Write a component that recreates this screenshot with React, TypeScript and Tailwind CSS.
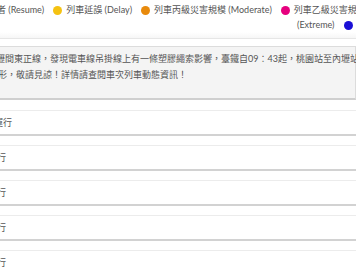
const legend = [
  { color: "bg-[#f5c211]", label: "列車延誤 (Delay)" },
  { color: "bg-[#e88a0c]", label: "列車丙級災害規模 (Moderate)" },
  { color: "bg-[#e6007e]", label: "列車乙級災害規模" },
];

const rows = ["運行", "行", "行", "行", "行"];

function Dot({ color }: { color: string }) {
  return <span className={`inline-block h-[9px] w-[9px] shrink-0 rounded-full ${color}`} />;
}

export default function App() {
  return (
    <div className="h-[272px] w-[356px] overflow-hidden bg-white font-['Lato','Noto_Sans_CJK_TC',sans-serif] text-[9px] text-[#555]">
      {/* legend */}
      <div className="flex h-[18px] items-center gap-[9px] whitespace-nowrap pt-[2px]">
        <span className="-ml-[3px]">者 (Resume)</span>
        {legend.map((item) => (
          <span key={item.label} className="flex items-center gap-[4px]">
            <Dot color={item.color} />
            {item.label}
          </span>
        ))}
      </div>
      <div className="flex h-[14px] items-center gap-[9px] whitespace-nowrap pl-[297px]">
        <span>(Extreme)</span>
        <span className="flex items-center gap-[4px]">
          <Dot color="bg-[#1a0fd6]" />
          列車
        </span>
      </div>

      {/* divider */}
      <div className="h-[6px] bg-gradient-to-b from-white to-[#f6f6f6]" />
      <div className="h-px bg-[#e6e6e6]" />

      {/* notice */}
      <div className="mt-[7px] -ml-px border border-[#dcdcdc] border-b-2 border-b-[#cfcfcf] bg-[#f4f4f4] pt-[4px] pb-[15px] leading-[16px] whitespace-nowrap">
        <p className="-ml-[4px]">壢間東正線，發現電車線吊掛線上有一條塑膠繩索影響，臺鐵自09：43起，桃園站至內壢站各次南下列車</p>
        <p className="-ml-[2px]">形，敬請見諒！詳情請查閱車次列車動態資訊！</p>
      </div>

      {/* rows */}
      <div className="mt-[10px] flex flex-col gap-[9px]">
        {rows.map((text, i) => (
          <div
            key={i}
            className="flex h-[26px] items-center border-t border-[#ececec] border-b-2 border-b-[#d2d2d2] bg-white whitespace-nowrap"
          >
            <span className={i === 0 ? "-ml-[6px]" : "-ml-[3px]"}>{text}</span>
          </div>
        ))}
      </div>
    </div>
  );
}
